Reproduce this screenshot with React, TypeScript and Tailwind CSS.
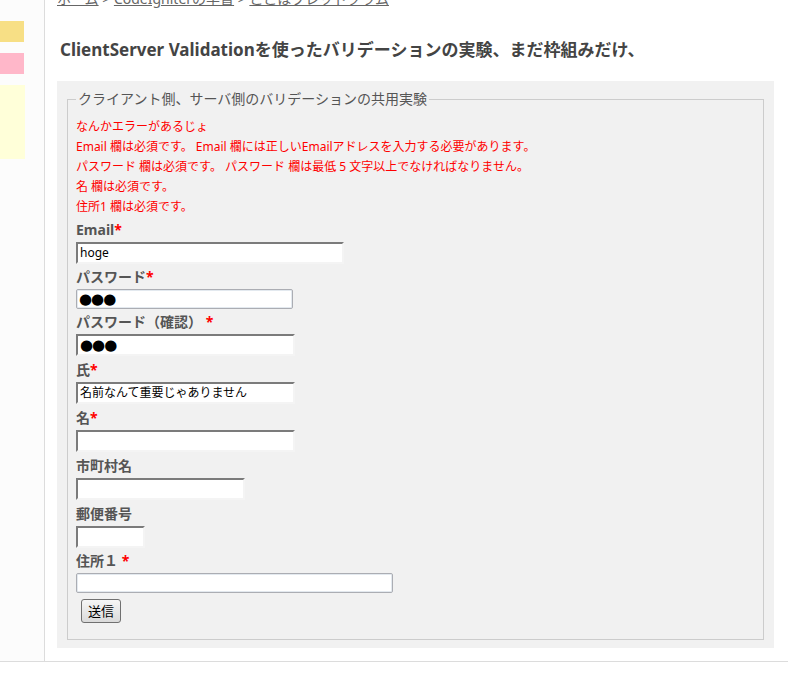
const fontStack = "font-['Noto_Sans','Noto_Sans_CJK_JP',sans-serif]";

type Field = {
    label: string;
    required: boolean;
    space?: boolean;
    width: string;
    value?: string;
    kind: "inset" | "flat" | "password" | "passwordInset";
    gap: string;
};

const errors: string[] = [
    "なんかエラーがあるじょ",
    "Email 欄は必須です。 Email 欄には正しいEmailアドレスを入力する必要があります。",
    "パスワード 欄は必須です。 パスワード 欄は最低 5 文字以上でなければなりません。",
    "名 欄は必須です。",
    "住所1 欄は必須です。",
];

const fields: Field[] = [
    { label: "Email", required: true, width: "w-[268px]", value: "hoge", kind: "inset", gap: "mb-px" },
    { label: "パスワード", required: true, width: "w-[217px]", value: "●●●", kind: "password", gap: "mb-px" },
    { label: "パスワード（確認）", required: true, space: true, width: "w-[219px]", value: "●●●", kind: "passwordInset", gap: "mb-[2px]" },
    { label: "氏", required: true, width: "w-[219px]", value: "名前なんて重要じゃありません", kind: "inset", gap: "mb-[2px]" },
    { label: "名", required: true, width: "w-[219px]", kind: "inset", gap: "mb-[2px]" },
    { label: "市町村名", required: false, width: "w-[169px]", kind: "inset", gap: "mb-[2px]" },
    { label: "郵便番号", required: false, width: "w-[69px]", kind: "inset", gap: "mb-px" },
    { label: "住所１", required: true, space: true, width: "w-[317px]", kind: "flat", gap: "mb-0" },
];

function FormInput({ field }: { field: Field }) {
    const inset =
        "h-[22px] border-2 border-t-[#7b7b7b] border-l-[#7b7b7b] border-b-[#f4f4f4] border-r-[#f4f4f4]";
    const flat =
        "h-[20px] border border-[#abadb3] rounded-[2px] shadow-[inset_0_0_0_1px_#e3e9ef]";
    const isFlat = field.kind === "flat" || field.kind === "password";
    const isDots = field.kind === "password" || field.kind === "passwordInset";

    return (
        <div
            className={`${field.width} ${isFlat ? flat : inset} bg-white flex items-center pl-[2px] overflow-hidden`}
        >
            {field.value && (
                <span
                    className={
                        isDots
                            ? "text-[15px] leading-none text-black tracking-[-1px] font-['DejaVu_Sans',sans-serif]"
                            : "text-[12px] leading-none text-black"
                    }
                >
                    {field.value}
                </span>
            )}
        </div>
    );
}

export default function App() {
    return (
        <div className={`w-[788px] bg-white ${fontStack} overflow-hidden h-[676px]`}>
            <div className="flex">
                {/* SIDEBAR */}
                <aside className="w-[45px] shrink-0 border-r border-[#dcdcdc] bg-[#fcfcfc] pt-[21px]">
                    <div className="w-[24px] h-[21px] bg-[#f7df85]" />
                    <div className="w-[24px] h-[21px] bg-[#ffb7c9] mt-[11px]" />
                    <div className="w-[25px] h-[74px] bg-[#ffffd9] mt-[11px]" />
                </aside>

                {/* MAIN */}
                <main className="flex-1 pl-[12px] pr-[14px] pb-[13px]">
                    <div className="-mt-[11px] h-[20px] text-[14px] leading-[20px] text-[#666] whitespace-nowrap">
                        <span className="underline">ホーム</span>
                        <span> &gt; </span>
                        <span className="underline">CodeIgniterの学習</span>
                        <span> &gt; </span>
                        <span className="underline">ここはブレッドクラム</span>
                    </div>

                    <h1 className="mt-[29px] pl-[3px] text-[17px] leading-[24px] font-bold text-[#444] whitespace-nowrap">
                        ClientServer Validationを使ったバリデーションの実験、まだ枠組みだけ、
                    </h1>

                    <div className="mt-[19px] bg-[#f1f1f1] px-[10px] pt-[8px] pb-[8px]">
                        <fieldset className="border border-[#cccccc] px-[8px] pb-[16px]">
                            <legend className="ml-0 px-[2px] text-[14px] leading-[20px] text-[#555]">
                                クライアント側、サーバ側のバリデーションの共用実験
                            </legend>

                            <div className="pt-[8px] text-[12px] leading-[20px] text-[#ff0000]">
                                {errors.map((e) => (
                                    <p key={e} className="whitespace-nowrap">
                                        {e}
                                    </p>
                                ))}
                            </div>

                            <div className="mt-px flex flex-col">
                                {fields.map((f) => (
                                    <div key={f.label} className={f.gap}>
                                        <label className="block text-[14px] leading-[24px] font-bold text-[#555]">
                                            {f.label}
                                            {f.space && " "}
                                            {f.required && <span className="text-[#ff0000]">*</span>}
                                        </label>
                                        <FormInput field={f} />
                                    </div>
                                ))}
                            </div>

                            <button
                                type="button"
                                className="mt-[6px] ml-[5px] h-[24px] px-[6px] border border-[#707070] rounded-[3px] bg-gradient-to-b from-[#f6f6f6] to-[#dadada] text-[13px] leading-[20px] text-black"
                            >
                                送信
                            </button>
                        </fieldset>
                    </div>
                </main>
            </div>

            {/* FOOTER */}
            <div className="border-t border-[#dcdcdc] h-[20px]" />
        </div>
    );
}
